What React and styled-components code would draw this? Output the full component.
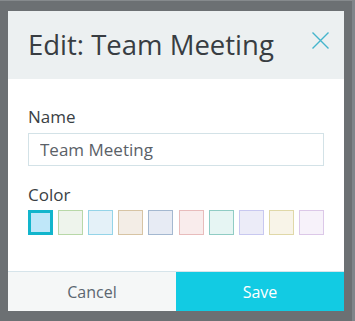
import React, { useState } from "react";
import styled, { createGlobalStyle } from "styled-components";

const Global = createGlobalStyle`
  html, body { margin: 0; padding: 0; }
  body {
    background: #6c7073;
    font-family: "Open Sans", "Liberation Sans", sans-serif;
  }
`;

const Frame = styled.div`
  box-sizing: border-box;
  width: 355px;
  height: 321px;
  border-top: 1px solid #868a8d;
  border-right: 3px solid #80858a;
  padding: 10px 0 0 8px;
`;

const Modal = styled.div`
  width: 336px;
  height: 300px;
  background: #ffffff;
  display: flex;
  flex-direction: column;
`;

const Header = styled.div`
  box-sizing: border-box;
  height: 68px;
  background: #ecf0f1;
  display: flex;
  justify-content: space-between;
  align-items: flex-start;
  padding: 0 15px 0 20px;
`;

const Title = styled.h1`
  margin: 0;
  padding-top: 17px;
  font-size: 27.5px;
  line-height: 34px;
  font-weight: 400;
  color: #383d42;
  letter-spacing: 0;
`;

const CloseButton = styled.button`
  border: 0;
  background: none;
  padding: 0;
  margin-top: 21px;
  width: 17px;
  height: 17px;
  cursor: pointer;
  display: block;
`;

const Body = styled.div`
  flex: 1;
  padding: 28px 20px 0 20px;
  display: flex;
  flex-direction: column;
`;

const Label = styled.label`
  display: block;
  font-size: 17px;
  line-height: 20px;
  color: #3a3f44;
  margin-bottom: ${(p) => p.$gap}px;
`;

const Input = styled.input`
  box-sizing: border-box;
  width: 296px;
  height: 33px;
  border: 1px solid #d3e2e7;
  padding: 0 11px;
  font-family: inherit;
  font-size: 17px;
  color: #5a6168;
  outline: none;
  margin-bottom: 19px;
`;

const Swatches = styled.div`
  display: flex;
  justify-content: space-between;
  width: 296px;
`;

const Swatch = styled.button`
  box-sizing: border-box;
  width: 25px;
  height: 25px;
  padding: 0;
  background: ${(p) => p.$fill};
  border: ${(p) => (p.$selected ? "3px solid #12b5cc" : `1px solid ${p.$border}`)};
  cursor: pointer;
`;

const Footer = styled.div`
  display: flex;
  border-top: 1px solid #d6e4ea;
  height: 39px;
`;

const FooterButton = styled.button`
  flex: 1;
  border: 0;
  margin: 0;
  font-family: inherit;
  font-size: 16px;
  background: ${(p) => (p.$primary ? "#12cbe3" : "#f5f7f7")};
  color: ${(p) => (p.$primary ? "#ffffff" : "#5c6670")};
  cursor: pointer;
`;

const colors = [
  { fill: "#bfe7f9", border: "#12b5cc" },
  { fill: "#eef4ec", border: "#b8d8a8" },
  { fill: "#e4f1f8", border: "#94d4e8" },
  { fill: "#f3ede6", border: "#d7c4a4" },
  { fill: "#e7ebf4", border: "#a4b8d0" },
  { fill: "#f9ecec", border: "#e8bcbc" },
  { fill: "#e6f5f3", border: "#90ccc4" },
  { fill: "#ececf8", border: "#c8c8f0" },
  { fill: "#f8f4e8", border: "#e0d8a8" },
  { fill: "#f7f2fa", border: "#dcc8e8" },
];

export default function App() {
  const [selected, setSelected] = useState(0);
  const [name, setName] = useState("Team Meeting");
  return (
    <>
      <Global />
      <Frame>
        <Modal>
          <Header>
            <Title>Edit: Team Meeting</Title>
            <CloseButton aria-label="Close">
              <svg width="17" height="17" viewBox="0 0 17 17">
                <path d="M0.5 0.5 L16.5 16.5 M16.5 0.5 L0.5 16.5" stroke="#45b5cc" strokeWidth="1.4" fill="none" />
              </svg>
            </CloseButton>
          </Header>
          <Body>
            <Label $gap={6}>Name</Label>
            <Input value={name} onChange={(e) => setName(e.target.value)} />
            <Label $gap={5}>Color</Label>
            <Swatches>
              {colors.map((c, i) => (
                <Swatch
                  key={i}
                  $fill={c.fill}
                  $border={c.border}
                  $selected={i === selected}
                  onClick={() => setSelected(i)}
                />
              ))}
            </Swatches>
          </Body>
          <Footer>
            <FooterButton>Cancel</FooterButton>
            <FooterButton $primary>Save</FooterButton>
          </Footer>
        </Modal>
      </Frame>
    </>
  );
}
